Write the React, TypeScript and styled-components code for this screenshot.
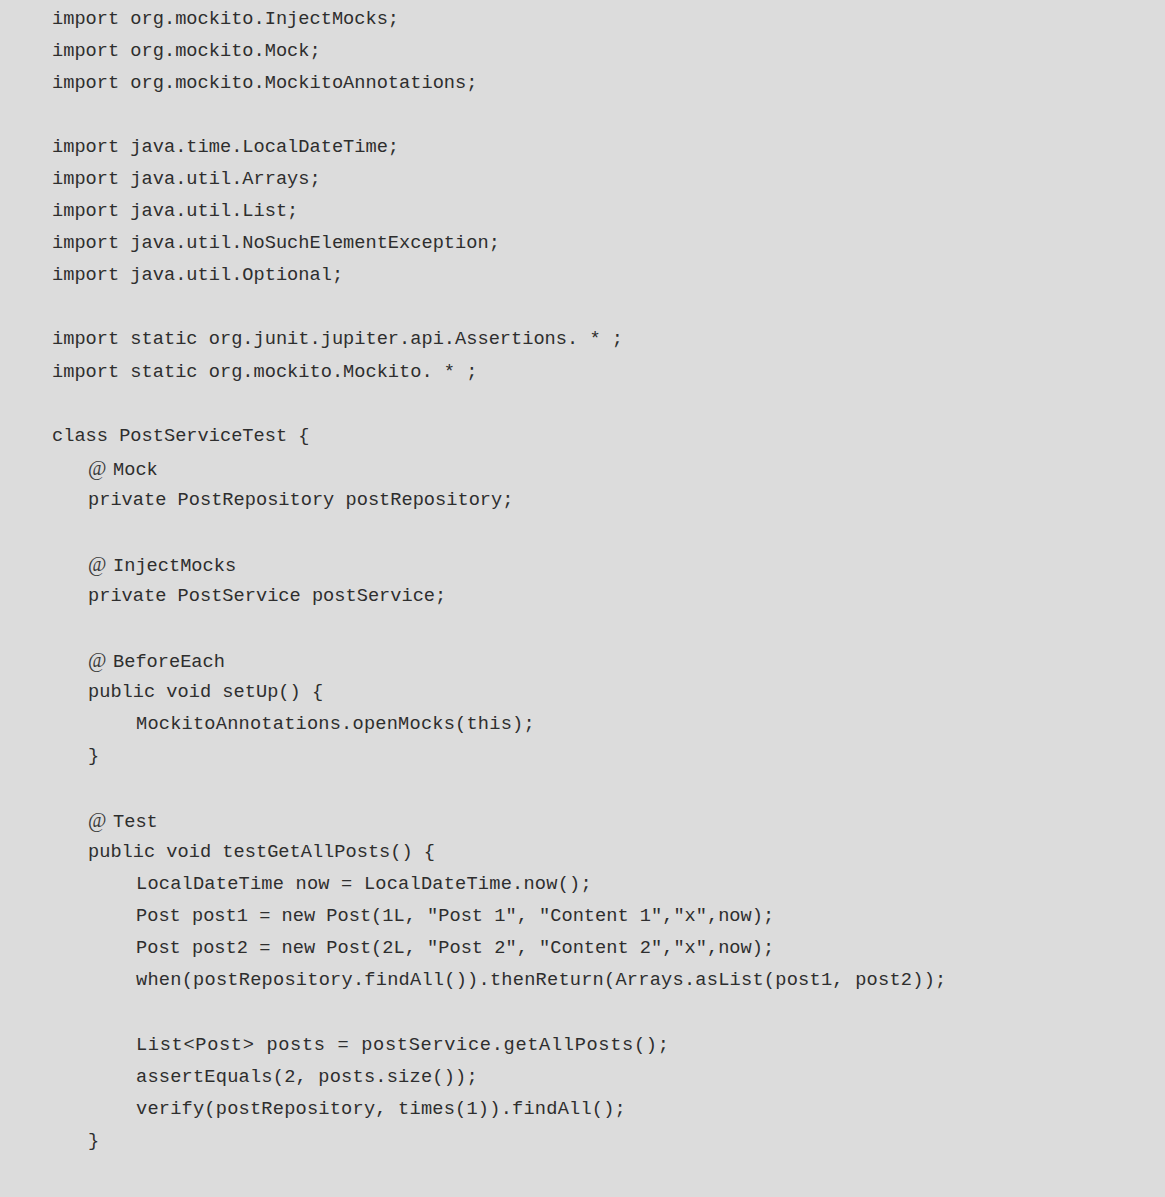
import React from "react";
import styled, { createGlobalStyle } from "styled-components";

const Global = createGlobalStyle`
  html, body {
    margin: 0;
    padding: 0;
    background: #dcdcdc;
    overflow: hidden;
  }
`;

const Page = styled.div`
  box-sizing: border-box;
  width: 1165px;
  height: 1197px;
  padding: 3px 0 0 52px;
  background: #dcdcdc;
  overflow: hidden;
`;

const Code = styled.pre`
  margin: 0;
  font-family: "Liberation Mono", "Courier New", monospace;
  font-size: 18.67px;
  line-height: 32.06px;
  color: #2e2e2e;
  white-space: pre;
`;

const Line = styled.div<{ $indent: number; $track?: number }>`
  height: 32.06px;
  padding-left: ${(p) => (p.$indent === 0 ? 0 : p.$indent === 1 ? 36 : 84)}px;
  letter-spacing: ${(p) => p.$track ?? 0}px;
`;

const At = styled.span`
  display: inline-block;
  width: 25px;
  font-family: "Liberation Serif", "Times New Roman", serif;
  font-size: 20px;
  color: #3a3a3a;
`;

type L = { i: number; t: string; at?: boolean; k?: number };

const lines: L[] = [
  { i: 0, t: "import org.mockito.InjectMocks;" },
  { i: 0, t: "import org.mockito.Mock;" },
  { i: 0, t: "import org.mockito.MockitoAnnotations;" },
  { i: 0, t: "" },
  { i: 0, t: "import java.time.LocalDateTime;" },
  { i: 0, t: "import java.util.Arrays;" },
  { i: 0, t: "import java.util.List;" },
  { i: 0, t: "import java.util.NoSuchElementException;" },
  { i: 0, t: "import java.util.Optional;" },
  { i: 0, t: "" },
  { i: 0, t: "import static org.junit.jupiter.api.Assertions. * ;" },
  { i: 0, t: "import static org.mockito.Mockito. * ;" },
  { i: 0, t: "" },
  { i: 0, t: "class PostServiceTest {" },
  { i: 1, t: "Mock", at: true },
  { i: 1, t: "private PostRepository postRepository;" },
  { i: 1, t: "" },
  { i: 1, t: "InjectMocks", at: true },
  { i: 1, t: "private PostService postService;" },
  { i: 1, t: "" },
  { i: 1, t: "BeforeEach", at: true },
  { i: 1, t: "public void setUp() {" },
  { i: 2, t: "MockitoAnnotations.openMocks(this);", k: 0.2 },
  { i: 1, t: "}" },
  { i: 1, t: "" },
  { i: 1, t: "Test", at: true },
  { i: 1, t: "public void testGetAllPosts() {" },
  { i: 2, t: "LocalDateTime now = LocalDateTime.now();", k: 0.2 },
  { i: 2, t: 'Post post1 = new Post(1L, "Post 1", "Content 1","x",now);' },
  { i: 2, t: 'Post post2 = new Post(2L, "Post 2", "Content 2","x",now);' },
  { i: 2, t: "when(postRepository.findAll()).thenReturn(Arrays.asList(post1, post2));", k: 0.22 },
  { i: 2, t: "" },
  { i: 2, t: "List<Post> posts = postService.getAllPosts();", k: 0.66 },
  { i: 2, t: "assertEquals(2, posts.size());", k: 0.2 },
  { i: 2, t: "verify(postRepository, times(1)).findAll();", k: 0.2 },
  { i: 1, t: "}" },
  { i: 1, t: "" },
  { i: 1, t: "Test", at: true },
];

export default function App() {
  return (
    <>
      <Global />
      <Page>
        <Code>
          {lines.map((l, n) => (
            <Line key={n} $indent={l.i} $track={l.k}>
              {l.at && <At>@</At>}
              {l.t}
            </Line>
          ))}
        </Code>
      </Page>
    </>
  );
}
